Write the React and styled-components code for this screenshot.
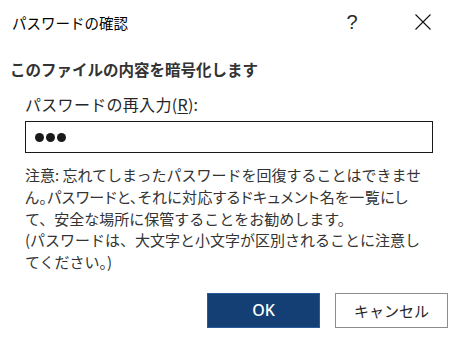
import React from "react";
import styled, { createGlobalStyle } from "styled-components";

const GlobalStyle = createGlobalStyle`
  html, body {
    margin: 0;
    padding: 0;
    background: #ffffff;
  }
  body {
    font-family: "Noto Sans CJK JP", "Noto Sans", sans-serif;
  }
`;

const Dialog = styled.div`
  width: 455px;
  height: 338px;
  box-sizing: border-box;
  background: #ffffff;
  display: flex;
  flex-direction: column;
`;

const TitleBar = styled.div`
  display: flex;
  align-items: center;
  height: 44px;
  padding-left: 12px;
  padding-right: 9px;
  gap: 25px;
  .title {
    flex: 1;
    font-size: 14.5px;
    color: #000000;
  }
`;

const TitleButton = styled.button`
  display: flex;
  align-items: center;
  justify-content: center;
  width: 46px;
  height: 44px;
  padding: 0;
  border: none;
  background: transparent;
  color: #2a2a2a;
  font-family: "Liberation Sans", sans-serif;
  font-weight: 400;
  font-size: 20px;
  cursor: pointer;
`;

const Body = styled.div`
  padding-left: 10px;
  display: flex;
  flex-direction: column;
`;

const Heading = styled.div`
  margin-top: 14px;
  font-size: 15.5px;
  line-height: 22px;
  font-weight: 700;
  color: #333333;
`;

const Field = styled.div`
  padding-left: 15px;
  padding-right: 22px;
  display: flex;
  flex-direction: column;
`;

const Label = styled.label`
  margin-top: 13px;
  font-size: 16px;
  line-height: 22px;
  letter-spacing: 0.3px;
  color: #262626;
  u {
    text-decoration: underline;
    text-underline-offset: 2px;
  }
`;

const PasswordBox = styled.div`
  margin-top: 6px;
  height: 32px;
  box-sizing: border-box;
  border: 1px solid #1a1a1a;
  display: flex;
  align-items: center;
  gap: 2px;
  padding-left: 9px;
`;

const Dot = styled.span`
  width: 9px;
  height: 9px;
  border-radius: 50%;
  background: #1a1a1a;
`;

const Note = styled.div`
  margin-top: 11px;
  font-size: 15px;
  line-height: 21.75px;
  color: #333333;
  white-space: nowrap;
`;

const TightLine = styled.span`
  font-feature-settings: "palt";
  letter-spacing: ${(p) => p.$spacing}px;
`;

const ButtonRow = styled.div`
  margin-top: 20px;
  display: flex;
  justify-content: flex-end;
  gap: 15px;
  padding-right: 7px;
`;

const DialogButton = styled.button`
  width: 113px;
  height: 35px;
  box-sizing: border-box;
  border: 1px solid ${(p) => (p.$primary ? "#2a5a9a" : "#8c8c8c")};
  background: ${(p) => (p.$primary ? "#143f74" : "#ffffff")};
  color: ${(p) => (p.$primary ? "#ffffff" : "#262626")};
  font-family: ${(p) =>
    p.$primary
      ? '"Noto Sans", "Noto Sans CJK JP", sans-serif'
      : '"Noto Sans CJK JP", sans-serif'};
  font-size: ${(p) => (p.$primary ? "16px" : "15px")};
  font-weight: ${(p) => (p.$primary ? 500 : 400)};
  padding: 0;
  cursor: pointer;
`;

const CloseIcon = () => (
  <svg width="16" height="16" viewBox="0 0 16 16">
    <path d="M0.5 0.5 L15.5 15.5 M15.5 0.5 L0.5 15.5" stroke="#111" strokeWidth="1.1" fill="none" />
  </svg>
);

const App = () => {
  return (
    <>
      <GlobalStyle />
      <Dialog>
        <TitleBar>
          <span className="title">パスワードの確認</span>
          <TitleButton>?</TitleButton>
          <TitleButton>
            <CloseIcon />
          </TitleButton>
        </TitleBar>
        <Body>
          <Heading>このファイルの内容を暗号化します</Heading>
          <Field>
            <Label>
              パスワードの再入力(<u>R</u>):
            </Label>
            <PasswordBox>
              <Dot />
              <Dot />
              <Dot />
            </PasswordBox>
            <Note>
              注意: 忘れてしまったパスワードを回復することはできませ
              <br />
              <TightLine $spacing={0.4}>
                ん。パスワードと、それに対応するドキュメント名を一覧にし
              </TightLine>
              <br />
              て、安全な場所に保管することをお勧めします。
              <br />
              (パスワードは、大文字と小文字が区別されることに注意し
              <br />
              てください。)
            </Note>
          </Field>
          <ButtonRow>
            <DialogButton $primary>OK</DialogButton>
            <DialogButton>キャンセル</DialogButton>
          </ButtonRow>
        </Body>
      </Dialog>
    </>
  );
};

export default App;
